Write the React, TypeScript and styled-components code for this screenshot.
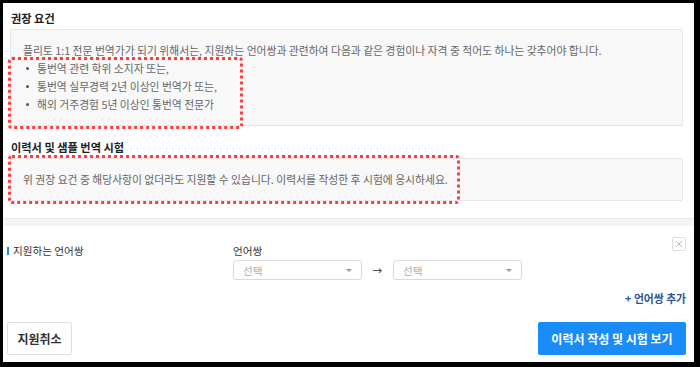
import React from 'react';
import styled, {createGlobalStyle} from "styled-components";

const GlobalStyle = createGlobalStyle`
  html, body {
    margin: 0;
    padding: 0;
    background: #000;
  }
  body {
    font-family: "Noto Sans CJK KR", "Noto Sans", sans-serif;
  }
`;

const Frame = styled.div`
  width: 700px;
  height: 367px;
  box-sizing: border-box;
  padding: 3px 6px 5px 3px;
  background: #000;
`;

const Card = styled.div`
  height: 100%;
  background: #fff;
  display: flex;
  flex-direction: column;
`;

const Section = styled.div`
  padding: 7px 11px 0 7px;
`;

const SectionTitle = styled.h3<{ $gap?: number }>`
  margin: ${p => p.$gap || 0}px 0 3px 1px;
  font-size: 11.2px;
  line-height: 16px;
  font-weight: 700;
  color: #222;
`;

const InfoBox = styled.div`
  position: relative;
  background: #f8f8f8;
  border: 1px solid #e6e6e6;
  border-radius: 2px;
  padding: 11px 12px 12px;
  font-size: 10.8px;
  line-height: 18px;
  color: #666;
`;

const BulletList = styled.ul`
  margin: 0;
  padding: 0 0 0 14px;
  list-style: none;
`;

const BulletItem = styled.li`
  position: relative;
  &::before {
    content: "";
    position: absolute;
    left: -11px;
    top: 8px;
    width: 3px;
    height: 3px;
    border-radius: 50%;
    background: #555;
  }
`;

const Highlight = styled.div<{ $left: number; $top: number; $width: number; $height: number }>`
  position: absolute;
  left: ${p => p.$left}px;
  top: ${p => p.$top}px;
  width: ${p => p.$width}px;
  height: ${p => p.$height}px;
  box-sizing: border-box;
  border: 3px dotted #ff3d3d;
  border-radius: 4px;
  pointer-events: none;
`;

const Divider = styled.div`
  margin-top: 17px;
  height: 7px;
  background: #f4f4f4;
  border-top: 1px solid #e9e9e9;
`;

const ApplySection = styled.div`
  flex: 1;
  display: flex;
  flex-direction: column;
  padding: 11px 8px 7px 4px;
`;

const LangRow = styled.div`
  display: flex;
  align-items: flex-start;
`;

const RowLabel = styled.div`
  width: 226px;
  margin-top: 6px;
  display: flex;
  align-items: center;
  gap: 4px;
  font-size: 10.6px;
  line-height: 16px;
  color: #333;
  &::before {
    content: "";
    width: 2px;
    height: 8px;
    background: #1e88e5;
  }
`;

const FieldColumn = styled.div`
  margin-top: 6px;
  display: flex;
  flex-direction: column;
`;

const FieldLabel = styled.div`
  font-size: 10.6px;
  line-height: 16px;
  color: #333;
  margin-bottom: 1px;
`;

const SelectRow = styled.div`
  display: flex;
  align-items: center;
`;

const SelectBox = styled.div`
  width: 129px;
  height: 20px;
  box-sizing: border-box;
  border: 1px solid #d9d9d9;
  border-radius: 3px;
  background: #fff;
  display: flex;
  align-items: center;
  justify-content: space-between;
  padding: 0 9px 0 9px;
  font-size: 10.6px;
  color: #aaa;
  &::after {
    content: "";
    border-left: 3px solid transparent;
    border-right: 3px solid transparent;
    border-top: 3px solid #999;
  }
`;

const PairArrow = styled.span`
  width: 31px;
  text-align: center;
  font-size: 10px;
  font-weight: 700;
  color: #555;
`;

const CloseButton = styled.button`
  margin-left: auto;
  width: 14px;
  height: 14px;
  padding: 0;
  box-sizing: border-box;
  border: 1px solid #dedede;
  border-radius: 2px;
  background: #fff;
  display: flex;
  align-items: center;
  justify-content: center;
`;

const AddLink = styled.div`
  margin-top: 10px;
  align-self: flex-end;
  font-size: 10.8px;
  line-height: 16px;
  font-weight: 700;
  color: #2c5697;
`;

const ButtonRow = styled.div`
  margin-top: auto;
  display: flex;
  justify-content: space-between;
  align-items: flex-end;
`;

const CancelButton = styled.button`
  height: 33px;
  width: 65px;
  border: 1px solid #e0e0e0;
  border-radius: 2px;
  background: #fff;
  font-family: inherit;
  font-size: 12px;
  font-weight: 700;
  color: #333;
`;

const PrimaryButton = styled.button`
  height: 33px;
  width: 148px;
  border: none;
  border-radius: 2px;
  background: #1a8cf8;
  font-family: inherit;
  font-size: 12px;
  font-weight: 700;
  color: #fff;
`;

const App: React.FC = () => {
  return (
      <Frame>
        <GlobalStyle/>
        <Card>
          <Section>
            <SectionTitle>권장 요건</SectionTitle>
            <InfoBox>
              플리토 1:1 전문 번역가가 되기 위해서는, 지원하는 언어쌍과 관련하여 다음과 같은 경험이나 자격 중 적어도 하나는 갖추어야 합니다.
              <BulletList>
                <BulletItem>통번역 관련 학위 소지자 또는,</BulletItem>
                <BulletItem>통번역 실무경력 2년 이상인 번역가 또는,</BulletItem>
                <BulletItem>해외 거주경험 5년 이상인 통번역 전문가</BulletItem>
              </BulletList>
              <Highlight $left={-3} $top={27} $width={235} $height={72}/>
            </InfoBox>
            <SectionTitle $gap={13}>이력서 및 샘플 번역 시험</SectionTitle>
            <InfoBox>
              위 권장 요건 중 해당사항이 없더라도 지원할 수 있습니다. 이력서를 작성한 후 시험에 응시하세요.
              <Highlight $left={-3} $top={-4} $width={452} $height={49}/>
            </InfoBox>
          </Section>
          <Divider/>
          <ApplySection>
            <LangRow>
              <RowLabel>지원하는 언어쌍</RowLabel>
              <FieldColumn>
                <FieldLabel>언어쌍</FieldLabel>
                <SelectRow>
                  <SelectBox>선택</SelectBox>
                  <PairArrow>→</PairArrow>
                  <SelectBox>선택</SelectBox>
                </SelectRow>
              </FieldColumn>
              <CloseButton aria-label="삭제">
                <svg width="8" height="8" viewBox="0 0 8 8">
                  <path d="M1 1L7 7M7 1L1 7" stroke="#bbb" strokeWidth="1"/>
                </svg>
              </CloseButton>
            </LangRow>
            <AddLink>+ 언어쌍 추가</AddLink>
            <ButtonRow>
              <CancelButton>지원취소</CancelButton>
              <PrimaryButton>이력서 작성 및 시험 보기</PrimaryButton>
            </ButtonRow>
          </ApplySection>
        </Card>
      </Frame>
  );
};

export default App;
